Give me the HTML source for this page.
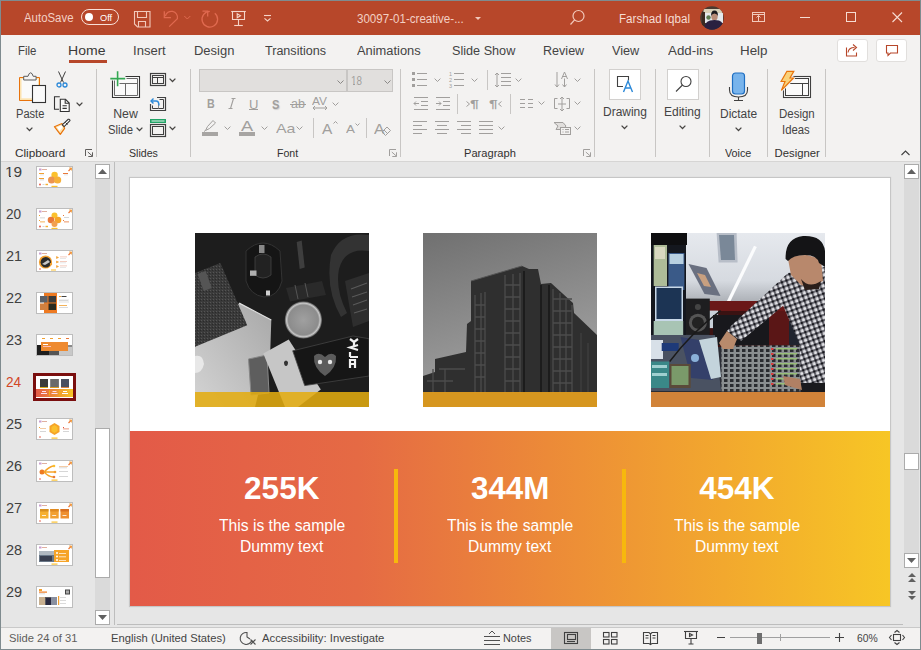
<!DOCTYPE html>
<html><head><meta charset="utf-8"><style>
*{box-sizing:border-box;margin:0;padding:0}
html,body{width:921px;height:650px;overflow:hidden;background:#7f8b8f;font-family:"Liberation Sans",sans-serif;}
.a{position:absolute}
.t{position:absolute;white-space:nowrap;line-height:1;transform-origin:0 0}
svg{position:absolute;overflow:visible}
</style></head><body>
<div class="a" style="left:1px;top:1px;width:919px;height:34px;background:#B7472A"></div>
<div class="a" style="left:1px;top:35px;width:919px;height:126px;background:#F3F2F1"></div>
<div class="a" style="left:1px;top:161px;width:919px;height:1px;background:#D6D5D4"></div>
<div class="a" style="left:1px;top:162px;width:919px;height:465px;background:#E6E6E6"></div>
<div class="a" style="left:1px;top:627px;width:919px;height:1px;background:#C9C9C9"></div>
<div class="a" style="left:1px;top:628px;width:919px;height:21px;background:#F3F2F1"></div>
<div class="t" style="left:24.10px;top:12.34px;font-size:12.00px;color:#F3D0C4;transform:scaleX(0.9510);">AutoSave</div>
<div class="a" style="left:81px;top:9px;width:38px;height:16px;border:1px solid #F8E0D8;border-radius:8px"></div>
<div class="a" style="left:84.5px;top:13px;width:8px;height:8px;background:#fff;border-radius:50%"></div>
<div class="t" style="left:100.30px;top:13.00px;font-size:9.80px;color:#FFFFFF;transform:scaleX(0.9419);">Off</div>
<svg style="left:133px;top:10px" width="18" height="18" viewBox="0 0 18 18" fill="none" stroke="#F2C9BB" stroke-width="1.1">
<path d="M1.5 1.5h15.5v15.5h-12.5l-3-3z"/><path d="M4.5 1.5v6h9v-6"/><path d="M5.5 17v-5.5h7v5.5"/></svg>
<svg style="left:158px;top:6px" width="64" height="24" viewBox="0 0 64 24" fill="none" stroke="#E06A50" stroke-width="1.25">
<path d="M6.3 5.2V11.5H12.9"/><path d="M7.4 10.2A6.1 6.1 0 0 1 19.4 12.6L11.2 20.6"/>
<path d="M26.3 10l3 3 3-3" stroke-width="1"/>
<path d="M51.8 5.4A7.8 7.8 0 1 0 56.8 7.2"/><path d="M44.5 5.2H49.7V10.4"/></svg>
<svg style="left:230px;top:10px" width="18" height="18" viewBox="0 0 18 18" fill="none" stroke="#F6D5C8" stroke-width="1.1">
<path d="M1.2 1.5h14.6"/><path d="M2.5 1.5v8h12v-8"/><path d="M8.5 9.5v6"/><path d="M4.2 15.5h8.6"/><path d="M7.2 3.7v4l3.3-2z"/></svg>
<svg style="left:263px;top:14px" width="10" height="9" viewBox="0 0 10 9" fill="none" stroke="#F6D5C8" stroke-width="1.1"><path d="M1 1.5h7"/><path d="M1.5 4.3l3 2.6 3-2.6"/></svg>
<div class="t" style="left:356.90px;top:13.29px;font-size:12.30px;color:#F3D0C4;transform:scaleX(0.9412);">30097-01-creative-...</div>
<svg style="left:475px;top:17px" width="6" height="3" viewBox="0 0 6 3"><path d="M0 0h6l-3 3z" fill="#F2C9BB"/></svg>
<svg style="left:569px;top:9px" width="18" height="18" viewBox="0 0 18 18" fill="none" stroke="#F2C9BB" stroke-width="1.2">
<circle cx="9.5" cy="7" r="5.5"/><path d="M5.6 10.9L1.5 15.5"/></svg>
<div class="t" style="left:618.66px;top:13.29px;font-size:12.30px;color:#F6DCD2;transform:scaleX(0.9447);">Farshad Iqbal</div>
<svg style="left:700px;top:6px" width="24" height="24" viewBox="0 0 24 24">
<defs><clipPath id="av"><circle cx="12" cy="12" r="11.8"/></clipPath></defs>
<g clip-path="url(#av)"><rect width="24" height="24" fill="#4a3a30"/>
<rect x="3.5" y="3" width="19" height="5" fill="#d8d0b8"/><rect x="5" y="7" width="18" height="10" fill="#e4e8ec"/>
<circle cx="8.5" cy="11.5" r="2.2" fill="#5a7a50"/><rect x="2" y="6" width="3" height="14" fill="#3a2a22"/>
<ellipse cx="14.5" cy="10.5" rx="3.2" ry="4" fill="#b88c78"/><path d="M11.2 10q-.5-5.5 3.3-5.5q3.8 0 3.3 5.5q-.8-2.5-3.3-2.5q-2.5 0-3.3 2.5z" fill="#1a1a1e"/>
<path d="M4 24q0-8 6-9.5l4.5-.5 4.5.5q5 1.5 5 9.5z" fill="#2a2040"/></g></svg>
<svg style="left:751px;top:11px" width="16" height="12" viewBox="0 0 16 12" fill="none" stroke="#F2C9BB" stroke-width="1">
<rect x="1.5" y="1.5" width="12" height="9"/><path d="M1.5 3.5h12"/><path d="M7.5 10v-5.5M5.5 6.5l2-2 2 2"/></svg>
<div class="a" style="left:800px;top:17px;width:10px;height:1px;background:#F6DCD2"></div>
<div class="a" style="left:846px;top:12px;width:10px;height:10px;border:1px solid #F6DCD2"></div>
<svg style="left:891px;top:11px" width="12" height="12" viewBox="0 0 12 12" stroke="#F6DCD2" stroke-width="1.1"><path d="M1.5 1.5l9.5 9.5M11 1.5L1.5 11"/></svg>
<div class="t" style="left:17.67px;top:45.49px;font-size:12.30px;color:#444444;transform:scaleX(0.9275);">File</div>
<div class="t" style="left:68.26px;top:45.49px;font-size:12.30px;color:#3b3a39;transform:scaleX(1.1420);">Home</div>
<div class="t" style="left:132.84px;top:45.49px;font-size:12.30px;color:#444444;transform:scaleX(1.0614);">Insert</div>
<div class="t" style="left:194.14px;top:45.49px;font-size:12.30px;color:#444444;transform:scaleX(1.0551);">Design</div>
<div class="t" style="left:264.50px;top:45.49px;font-size:12.30px;color:#444444;transform:scaleX(1.0213);">Transitions</div>
<div class="t" style="left:357.30px;top:45.49px;font-size:12.30px;color:#444444;transform:scaleX(1.0464);">Animations</div>
<div class="t" style="left:451.70px;top:45.49px;font-size:12.30px;color:#444444;transform:scaleX(1.0286);">Slide Show</div>
<div class="t" style="left:542.58px;top:45.49px;font-size:12.30px;color:#444444;transform:scaleX(1.0218);">Review</div>
<div class="t" style="left:612.00px;top:45.49px;font-size:12.30px;color:#444444;transform:scaleX(1.0320);">View</div>
<div class="t" style="left:667.90px;top:45.49px;font-size:12.30px;color:#444444;transform:scaleX(1.0831);">Add-ins</div>
<div class="t" style="left:739.91px;top:45.49px;font-size:12.30px;color:#444444;transform:scaleX(1.0879);">Help</div>
<div class="a" style="left:69px;top:60px;width:38px;height:3px;background:#B7472A"></div>
<div class="a" style="left:837px;top:39px;width:31px;height:23px;background:#fff;border:1px solid #E1DFDD;border-radius:3px"></div>
<div class="a" style="left:876px;top:39px;width:31px;height:23px;background:#fff;border:1px solid #E1DFDD;border-radius:3px"></div>
<svg style="left:845px;top:43px" width="14" height="14" viewBox="0 0 14 14" fill="none" stroke="#B7472A" stroke-width="1.1">
<path d="M1.5 4.5v8.5h10v-3.5"/><path d="M3 9.5C3.5 6 6.5 4.5 9.5 4.5"/><path d="M8 1.5l3.5 3-3.5 3"/></svg>
<svg style="left:885px;top:44px" width="14" height="13" viewBox="0 0 14 13" fill="none" stroke="#B7472A" stroke-width="1.1">
<path d="M1.5 1.5h11v7.5h-7l-2.5 2.5v-2.5h-1.5z"/></svg>
<div class="a" style="left:96px;top:69px;width:1px;height:88px;background:#C8C6C4"></div>
<div class="a" style="left:190px;top:69px;width:1px;height:88px;background:#C8C6C4"></div>
<div class="a" style="left:400px;top:69px;width:1px;height:88px;background:#C8C6C4"></div>
<div class="a" style="left:594px;top:69px;width:1px;height:88px;background:#C8C6C4"></div>
<div class="a" style="left:655px;top:69px;width:1px;height:88px;background:#C8C6C4"></div>
<div class="a" style="left:709px;top:69px;width:1px;height:88px;background:#C8C6C4"></div>
<div class="a" style="left:767px;top:69px;width:1px;height:88px;background:#C8C6C4"></div>
<div class="a" style="left:825px;top:69px;width:1px;height:88px;background:#C8C6C4"></div>
<svg style="left:85px;top:149px" width="9" height="8" viewBox="0 0 9 8" fill="none" stroke="#605E5C" stroke-width="1"><path d="M.5 7V.5H7"/><path d="M2.8 3l4.5 4M7.5 3.3v4.2h-4.2"/></svg>
<svg style="left:389px;top:149px" width="9" height="8" viewBox="0 0 9 8" fill="none" stroke="#A19F9D" stroke-width="1"><path d="M.5 7V.5H7"/><path d="M2.8 3l4.5 4M7.5 3.3v4.2h-4.2"/></svg>
<svg style="left:583px;top:149px" width="9" height="8" viewBox="0 0 9 8" fill="none" stroke="#A19F9D" stroke-width="1"><path d="M.5 7V.5H7"/><path d="M2.8 3l4.5 4M7.5 3.3v4.2h-4.2"/></svg>
<div class="t" style="left:15.40px;top:147.73px;font-size:11.30px;color:#323130;transform:scaleX(1.0401);">Clipboard</div>
<div class="t" style="left:129.20px;top:147.73px;font-size:11.30px;color:#323130;transform:scaleX(0.9383);">Slides</div>
<div class="t" style="left:276.50px;top:147.73px;font-size:11.30px;color:#323130;transform:scaleX(0.9375);">Font</div>
<div class="t" style="left:463.80px;top:147.73px;font-size:11.30px;color:#323130;transform:scaleX(0.9834);">Paragraph</div>
<div class="t" style="left:725.40px;top:147.73px;font-size:11.30px;color:#323130;transform:scaleX(0.9542);">Voice</div>
<div class="t" style="left:774.60px;top:147.73px;font-size:11.30px;color:#323130;">Designer</div>
<svg style="left:14px;top:68px" width="40" height="40" viewBox="0 0 40 40">
<path d="M5.5 9.5H25.5V32.5H5.5z" fill="#FCE3B0" stroke="#E8730C" stroke-width="1"/>
<rect x="7.5" y="11" width="16.5" height="19.3" fill="#FAFAFA"/>
<path d="M9.7 12V8.3H14Q15 4.8 16.6 4.8T19.2 8.3H22.1V12z" fill="#F4F4F4" stroke="#5c5c5c" stroke-width="1"/>
<rect x="18.5" y="17.5" width="13" height="17" fill="#FAFAFA" stroke="#333" stroke-width="1.1"/></svg>
<div class="t" style="left:15.70px;top:108.19px;font-size:12.30px;color:#444444;transform:scaleX(0.9018);">Paste</div>
<svg style="left:26px;top:127px" width="7" height="4" viewBox="0 0 7 4" fill="none" stroke="#484644" stroke-width="1.25"><path d="M.6 .6l2.9 2.9 2.9-2.9"/></svg>
<svg style="left:56px;top:71px" width="12" height="17" viewBox="0 0 12 17" fill="none">
<path d="M2.5 .5l5 11M9.5 .5l-5 11" stroke="#404040" stroke-width="1"/>
<circle cx="3" cy="14" r="2" stroke="#2B88D8" stroke-width="1.3"/><circle cx="9" cy="14" r="2" stroke="#2B88D8" stroke-width="1.3"/></svg>
<svg style="left:53px;top:95px" width="18" height="18" viewBox="0 0 18 18" fill="none" stroke="#333" stroke-width="1.1">
<path d="M6.8 1.7H1.5V14.3H6"/><path d="M7.3 4.3h5.2l3.7 3.7v8.5h-8.9z" fill="#FAFAFA"/><path d="M12.2 4.5v3.8h3.8"/><path d="M9.5 10.7h4.3M9.5 13.4h4.3"/></svg>
<svg style="left:76px;top:102px" width="7" height="4" viewBox="0 0 7 4" fill="none" stroke="#484644" stroke-width="1.25"><path d="M.6 .6l2.9 2.9 2.9-2.9"/></svg>
<svg style="left:53px;top:118px" width="18" height="18" viewBox="0 0 18 18">
<path d="M1.4 8.7L9 5.5L11.6 10.3L7.3 16.3z" fill="#FCE3B0" stroke="#E8730C" stroke-width="1.2" stroke-linejoin="round"/>
<path d="M4 9.2L8.5 7.3L9.6 9.6L6.4 13z" fill="#fff"/>
<path d="M9.2 6.8L15.2 1.3Q16.8 .8 17 2.6L11.2 8.6z" fill="#fff" stroke="#333" stroke-width="1.1"/>
<path d="M12.5 4.5l2 2" stroke="#333" stroke-width="1"/></svg>
<svg style="left:105px;top:66px" width="40" height="36" viewBox="0 0 40 36" fill="none">
<rect x="8" y="11" width="26" height="20" fill="#FAFAFA"/>
<path d="M20.5 10.5H34.5V31.5H7.5V14.5" stroke="#333" stroke-width="1.1"/>
<path d="M21.5 12.5H32.5V29.5H9.5V14.5" stroke="#6a6a6a" stroke-width="1"/>
<path d="M14.5 17.5H32.5M20.5 17.5V29.5" stroke="#6a6a6a" stroke-width="1"/>
<path d="M5.3 12.6H20.2M12.6 5.3V20.2" stroke="#33A852" stroke-width="1.6"/></svg>
<div class="t" style="left:113.20px;top:107.89px;font-size:12.30px;color:#444444;">New</div>
<div class="t" style="left:108.00px;top:123.99px;font-size:12.30px;color:#444444;transform:scaleX(0.9162);">Slide</div>
<svg style="left:136px;top:127px" width="7" height="4" viewBox="0 0 7 4" fill="none" stroke="#484644" stroke-width="1.25"><path d="M.6 .6l2.9 2.9 2.9-2.9"/></svg>
<svg style="left:150px;top:73px" width="16" height="13" viewBox="0 0 16 13" fill="none" stroke="#404040" stroke-width="1"><rect x=".5" y=".5" width="15" height="12" stroke-width="1.2"/><rect x="2.5" y="2.5" width="11" height="8"/><path d="M2.5 4.5h11M7.5 4.5v6"/></svg>
<svg style="left:169px;top:78px" width="7" height="4" viewBox="0 0 7 4" fill="none" stroke="#484644" stroke-width="1.25"><path d="M.6 .6l2.9 2.9 2.9-2.9"/></svg>
<svg style="left:149px;top:96px" width="18" height="15" viewBox="0 0 18 15" fill="none" stroke="#404040" stroke-width="1"><path d="M8 1.5h8.5v13h-15v-6.5" stroke-width="1.2"/><path d="M10.5 3.5h4v9h-11v-3"/><path d="M9.5 6.5v6" stroke="#888"/><path d="M2 5h5q3 0 3 4.5" stroke="#2B88D8" stroke-width="1.4"/><path d="M4.5 2.5l-2.5 2.5 2.5 2.5" stroke="#2B88D8" stroke-width="1.4"/></svg>
<svg style="left:150px;top:119px" width="16" height="18" viewBox="0 0 16 18" fill="none" stroke="#404040" stroke-width="1"><rect x=".75" y=".75" width="14.5" height="2.5" stroke="#21A366" stroke-width="1.5" fill="#E8F5EE"/><rect x=".5" y="5.5" width="15" height="12" stroke-width="1.2"/><rect x="2.5" y="7.5" width="11" height="8"/></svg>
<svg style="left:169px;top:126px" width="7" height="4" viewBox="0 0 7 4" fill="none" stroke="#484644" stroke-width="1.25"><path d="M.6 .6l2.9 2.9 2.9-2.9"/></svg>
<div class="a" style="left:199px;top:69px;width:148px;height:23px;background:#E1DFDD;border:1px solid #C8C6C4"></div>
<div class="a" style="left:347px;top:69px;width:46px;height:23px;background:#E1DFDD;border:1px solid #C8C6C4"></div>
<svg style="left:337px;top:80px" width="7" height="4" viewBox="0 0 7 4" fill="none" stroke="#8A8886" stroke-width="1"><path d="M.5 .5l3 3 3-3"/></svg>
<svg style="left:384px;top:80px" width="7" height="4" viewBox="0 0 7 4" fill="none" stroke="#8A8886" stroke-width="1"><path d="M.5 .5l3 3 3-3"/></svg>
<div class="t" style="left:350.80px;top:74.84px;font-size:12.00px;color:#A19F9D;transform:scaleX(0.8191);">18</div>
<div class="t" style="left:206.60px;top:98.42px;font-size:12.50px;color:#A19F9D;font-weight:bold;transform:scaleX(0.8556);">B</div>
<svg style="left:228px;top:98px" width="8" height="11" viewBox="0 0 8 11" fill="none" stroke="#A19F9D" stroke-width="1.1"><path d="M3.5 .5h4M.5 10.5h4M5.5 .5l-3 10"/></svg>
<div class="t" style="left:249.00px;top:98.54px;font-size:12.00px;color:#A19F9D;transform:scaleX(1.0875);">U</div>
<div class="a" style="left:249px;top:109px;width:9px;height:1px;background:#A19F9D"></div>
<div class="t" style="left:271.50px;top:98.00px;font-size:13.00px;color:#A19F9D;font-weight:bold;transform:scaleX(0.8556);text-shadow:1px 1px 1px #d0d0d0;">S</div>
<div class="t" style="left:291.00px;top:98.42px;font-size:12.50px;color:#A19F9D;">ab</div>
<div class="a" style="left:290px;top:104px;width:16px;height:1px;background:#A19F9D"></div>
<div class="t" style="left:312.30px;top:95.97px;font-size:11.50px;color:#A19F9D;transform:scaleX(1.0394);">AV</div>
<svg style="left:312px;top:105px" width="16" height="6" viewBox="0 0 16 6" fill="none" stroke="#A19F9D" stroke-width="1"><path d="M1 3h14M3 1l-2 2 2 2M13 1l2 2-2 2"/></svg>
<svg style="left:332px;top:102px" width="7" height="4" viewBox="0 0 7 4" fill="none" stroke="#A19F9D" stroke-width="1.0"><path d="M.6 .6l2.9 2.9 2.9-2.9"/></svg>
<svg style="left:202px;top:119px" width="17" height="17" viewBox="0 0 17 17">
<path d="M3.5 11.5l2-4 5.5-6 2.5 2.5-6 5.5-4 2z M2 12.5l1.5-1" fill="none" stroke="#A19F9D" stroke-width="1"/>
<rect x="0" y="13" width="16" height="4" fill="#A7A5A3"/></svg>
<svg style="left:224px;top:126px" width="7" height="4" viewBox="0 0 7 4" fill="none" stroke="#A19F9D" stroke-width="1.0"><path d="M.6 .6l2.9 2.9 2.9-2.9"/></svg>
<div class="t" style="left:240.50px;top:119.45px;font-size:14.00px;color:#A19F9D;transform:scaleX(1.3000);">A</div>
<div class="a" style="left:239px;top:132px;width:16px;height:4px;background:#A7A5A3"></div>
<svg style="left:260.5px;top:126px" width="7" height="4" viewBox="0 0 7 4" fill="none" stroke="#A19F9D" stroke-width="1.0"><path d="M.6 .6l2.9 2.9 2.9-2.9"/></svg>
<div class="t" style="left:276.00px;top:122.27px;font-size:13.50px;color:#A19F9D;transform:scaleX(1.1762);">Aa</div>
<svg style="left:296px;top:126px" width="7" height="4" viewBox="0 0 7 4" fill="none" stroke="#A19F9D" stroke-width="1.0"><path d="M.6 .6l2.9 2.9 2.9-2.9"/></svg>
<div class="a" style="left:313px;top:118px;width:1px;height:20px;background:#C8C6C4"></div>
<div class="t" style="left:322.00px;top:120.78px;font-size:15.50px;color:#A19F9D;">A</div>
<svg style="left:333px;top:121px" width="5" height="3" viewBox="0 0 5 3" fill="none" stroke="#A19F9D" stroke-width="1"><path d="M.5 2.5l2-2 2 2"/></svg>
<div class="t" style="left:345.70px;top:124.17px;font-size:11.50px;color:#A19F9D;transform:scaleX(1.1625);">A</div>
<svg style="left:355px;top:123px" width="5" height="3" viewBox="0 0 5 3" fill="none" stroke="#A19F9D" stroke-width="1"><path d="M.5 .5l2 2 2-2"/></svg>
<div class="a" style="left:366px;top:118px;width:1px;height:20px;background:#C8C6C4"></div>
<div class="t" style="left:373.80px;top:120.58px;font-size:15.50px;color:#A19F9D;transform:scaleX(1.0182);">A</div>
<svg style="left:381px;top:126px" width="10" height="10" viewBox="0 0 10 10" fill="none" stroke="#A19F9D" stroke-width="1"><path d="M1 6l5-5 3.5 3.5-5 5z M3 4l3.5 3.5"/></svg>
<svg style="left:412px;top:72px" width="15" height="15" viewBox="0 0 15 15"><rect x="0" y="0" width="3" height="3" fill="#A19F9D"/><rect x="5" y="1" width="10" height="1" fill="#A19F9D"/><rect x="0" y="6" width="3" height="3" fill="#A19F9D"/><rect x="5" y="7" width="10" height="1" fill="#A19F9D"/><rect x="0" y="12" width="3" height="3" fill="#A19F9D"/><rect x="5" y="13" width="10" height="1" fill="#A19F9D"/></svg>
<svg style="left:433.5px;top:78px" width="7" height="4" viewBox="0 0 7 4" fill="none" stroke="#A19F9D" stroke-width="1.0"><path d="M.6 .6l2.9 2.9 2.9-2.9"/></svg>
<svg style="left:449px;top:70px" width="16" height="19" viewBox="0 0 16 19">
<text x="0" y="6" font-size="5.5" fill="#A19F9D" font-family="Liberation Sans">1</text><text x="0" y="12" font-size="5.5" fill="#A19F9D" font-family="Liberation Sans">2</text><text x="0" y="18" font-size="5.5" fill="#A19F9D" font-family="Liberation Sans">3</text>
<rect x="5" y="3" width="10" height="1" fill="#A19F9D"/><rect x="5" y="9" width="10" height="1" fill="#A19F9D"/><rect x="5" y="15" width="10" height="1" fill="#A19F9D"/></svg>
<svg style="left:470.5px;top:78px" width="7" height="4" viewBox="0 0 7 4" fill="none" stroke="#A19F9D" stroke-width="1.0"><path d="M.6 .6l2.9 2.9 2.9-2.9"/></svg>
<div class="a" style="left:487px;top:70px;width:1px;height:20px;background:#C8C6C4"></div>
<svg style="left:494px;top:72px" width="17" height="16" viewBox="0 0 17 16" fill="none" stroke="#A19F9D" stroke-width="1">
<path d="M3 1v14M1 3l2-2 2 2M1 13l2 2 2-2"/><path d="M7 1.5h10M7 5.5h10M7 9.5h10M7 13.5h10"/></svg>
<svg style="left:514.5px;top:78px" width="7" height="4" viewBox="0 0 7 4" fill="none" stroke="#A19F9D" stroke-width="1.0"><path d="M.6 .6l2.9 2.9 2.9-2.9"/></svg>
<svg style="left:555px;top:71px" width="15" height="17" viewBox="0 0 15 17" fill="none" stroke="#A19F9D" stroke-width="1">
<path d="M2 1v15M0 13.5l2 2.5 2-2.5"/><path d="M9.5 7.5v8.5M7.5 13.5l2 2.5 2-2.5"/><path d="M6.5 8l3-7 3 7M7.5 5.5h4"/></svg>
<svg style="left:573.5px;top:78px" width="7" height="4" viewBox="0 0 7 4" fill="none" stroke="#A19F9D" stroke-width="1.0"><path d="M.6 .6l2.9 2.9 2.9-2.9"/></svg>
<svg style="left:413px;top:97px" width="15" height="14" viewBox="0 0 15 14" fill="none" stroke="#A19F9D" stroke-width="1"><path d="M1 .5h14M8 4.5h7M8 8.5h7M1 12.5h14"/><path d="M1 6.5h5M3 4.5l-2 2 2 2"/></svg>
<svg style="left:435px;top:97px" width="15" height="14" viewBox="0 0 15 14" fill="none" stroke="#A19F9D" stroke-width="1"><path d="M1 .5h14M8 4.5h7M8 8.5h7M1 12.5h14"/><path d="M1 6.5h5M4 4.5l2 2-2 2"/></svg>
<div class="a" style="left:457px;top:94px;width:1px;height:20px;background:#C8C6C4"></div>
<div class="t" style="left:470.00px;top:99.39px;font-size:11.00px;color:#A19F9D;font-weight:bold;transform:scaleX(1.4667);">¶</div>
<svg style="left:466px;top:101px" width="4" height="6" viewBox="0 0 4 6" fill="none" stroke="#A19F9D" stroke-width="1"><path d="M.5 .5l3 2.5-3 2.5"/></svg>
<div class="t" style="left:489.00px;top:99.39px;font-size:11.00px;color:#A19F9D;font-weight:bold;transform:scaleX(1.4167);">¶</div>
<svg style="left:498px;top:101px" width="4" height="6" viewBox="0 0 4 6" fill="none" stroke="#A19F9D" stroke-width="1"><path d="M3.5 .5l-3 2.5 3 2.5"/></svg>
<div class="a" style="left:510px;top:94px;width:1px;height:20px;background:#C8C6C4"></div>
<svg style="left:520px;top:99px" width="13" height="9" viewBox="0 0 13 9" fill="none" stroke="#A19F9D" stroke-width="1"><path d="M0 .5h5M0 4.5h5M0 8.5h5M8 .5h5M8 4.5h5M8 8.5h5"/></svg>
<svg style="left:538px;top:101px" width="7" height="4" viewBox="0 0 7 4" fill="none" stroke="#A19F9D" stroke-width="1.0"><path d="M.6 .6l2.9 2.9 2.9-2.9"/></svg>
<svg style="left:554px;top:96px" width="16" height="16" viewBox="0 0 16 16" fill="none" stroke="#A19F9D" stroke-width="1">
<path d="M3.5 2.5h-3v10h3M12.5 2.5h3v10h-3"/><path d="M8 1v14M6 3l2-2 2 2M6 13l2 2 2-2M4 8h8"/></svg>
<svg style="left:573.5px;top:101px" width="7" height="4" viewBox="0 0 7 4" fill="none" stroke="#A19F9D" stroke-width="1.0"><path d="M.6 .6l2.9 2.9 2.9-2.9"/></svg>
<svg style="left:413px;top:121px" width="15" height="13" viewBox="0 0 15 13" fill="none" stroke="#A19F9D" stroke-width="1"><path d="M0 .5h14M0 4.5h9M0 8.5h14M0 12.5h9"/></svg>
<svg style="left:435px;top:121px" width="15" height="13" viewBox="0 0 15 13" fill="none" stroke="#A19F9D" stroke-width="1"><path d="M0 .5h14M2 4.5h10M0 8.5h14M2 12.5h10"/></svg>
<svg style="left:457px;top:121px" width="15" height="13" viewBox="0 0 15 13" fill="none" stroke="#A19F9D" stroke-width="1"><path d="M0 .5h14M4 4.5h10M0 8.5h14M4 12.5h10"/></svg>
<svg style="left:479px;top:121px" width="15" height="13" viewBox="0 0 15 13" fill="none" stroke="#A19F9D" stroke-width="1"><path d="M0 .5h14M0 4.5h14M0 8.5h14M0 12.5h14"/></svg>
<svg style="left:497.5px;top:126px" width="7" height="4" viewBox="0 0 7 4" fill="none" stroke="#A19F9D" stroke-width="1.0"><path d="M.6 .6l2.9 2.9 2.9-2.9"/></svg>
<svg style="left:554px;top:122px" width="17" height="13" viewBox="0 0 17 13" fill="none" stroke="#A19F9D" stroke-width="1">
<path d="M0 .5h9l3 3.5-3 3.5h-7l2-3.5z" fill="#E1DFDD"/><rect x="6.5" y="5.5" width="10" height="7" fill="#F3F2F1"/><path d="M8.5 7.5h1M11 7.5h4M8.5 10h1M11 10h4"/></svg>
<svg style="left:573.5px;top:126px" width="7" height="4" viewBox="0 0 7 4" fill="none" stroke="#A19F9D" stroke-width="1.0"><path d="M.6 .6l2.9 2.9 2.9-2.9"/></svg>
<div class="a" style="left:609px;top:69px;width:32px;height:31px;background:#fff;border:1px solid #D2D0CE"></div>
<svg style="left:616px;top:75px" width="18" height="18" viewBox="0 0 18 18" fill="none">
<path d="M7 11.5H1.5V1.5h11v4" stroke="#404040" stroke-width="1.1"/><path d="M7.5 17l4.5-11 4.5 11M9 13h6" stroke="#2B88D8" stroke-width="1.4"/></svg>
<div class="t" style="left:602.53px;top:106.29px;font-size:12.30px;color:#444444;transform:scaleX(0.9737);">Drawing</div>
<svg style="left:620.5px;top:125px" width="7" height="4" viewBox="0 0 7 4" fill="none" stroke="#484644" stroke-width="1.25"><path d="M.6 .6l2.9 2.9 2.9-2.9"/></svg>
<div class="a" style="left:667px;top:69px;width:32px;height:31px;background:#fff;border:1px solid #D2D0CE"></div>
<svg style="left:675px;top:75px" width="18" height="18" viewBox="0 0 18 18" fill="none" stroke="#404040" stroke-width="1.1">
<circle cx="11" cy="6.5" r="5"/><path d="M7.5 10L1 16.5"/></svg>
<div class="t" style="left:663.62px;top:106.29px;font-size:12.30px;color:#444444;transform:scaleX(0.9766);">Editing</div>
<svg style="left:678.5px;top:125px" width="7" height="4" viewBox="0 0 7 4" fill="none" stroke="#484644" stroke-width="1.25"><path d="M.6 .6l2.9 2.9 2.9-2.9"/></svg>
<svg style="left:728px;top:72px" width="21" height="29" viewBox="0 0 21 29" fill="none">
<rect x="4.5" y="1" width="12" height="21" rx="3" fill="#78B4EC" stroke="#1F6FC2" stroke-width="1.2"/>
<path d="M1.5 15v3q0 7 9 7t9-7v-3" stroke="#404040" stroke-width="1.1"/><path d="M10.5 25v3M6 28.5h9" stroke="#404040" stroke-width="1.1"/></svg>
<div class="t" style="left:719.83px;top:108.19px;font-size:12.30px;color:#444444;transform:scaleX(0.9724);">Dictate</div>
<svg style="left:734.5px;top:127px" width="7" height="4" viewBox="0 0 7 4" fill="none" stroke="#484644" stroke-width="1.25"><path d="M.6 .6l2.9 2.9 2.9-2.9"/></svg>
<svg style="left:775px;top:66px" width="40" height="36" viewBox="0 0 40 36" fill="none">
<rect x="8.5" y="10.5" width="27" height="21" stroke="#404040" stroke-width="1.1" fill="#FAFAFA"/>
<rect x="10.5" y="12.5" width="23" height="17" stroke="#404040" stroke-width="1"/>
<path d="M10.5 17.5h23M27.5 17.5v12" stroke="#404040" stroke-width="1"/>
<path d="M11.9 5.3h6.9l-3.8 6.7h3.5l-12.1 12.4 3.6-8.9h-3.9z" fill="#FAD27A" stroke="#F3F2F1" stroke-width="3.2" stroke-linejoin="round"/>
<path d="M11.9 5.3h6.9l-3.8 6.7h3.5l-12.1 12.4 3.6-8.9h-3.9z" fill="#FAD27A" stroke="#E8730C" stroke-width="1.2"/></svg>
<div class="t" style="left:778.77px;top:108.19px;font-size:12.30px;color:#444444;transform:scaleX(0.9322);">Design</div>
<div class="t" style="left:782.48px;top:123.99px;font-size:12.30px;color:#444444;transform:scaleX(0.9194);">Ideas</div>
<svg style="left:901px;top:150px" width="9" height="6" viewBox="0 0 9 6" fill="none" stroke="#404040" stroke-width="1.1"><path d="M.5 5l4-4 4 4"/></svg>
<div class="a" style="left:350px;top:84px;width:3px;height:1px;background:#E1DFDD"></div>
<div class="a" style="left:355px;top:84px;width:1px;height:1px;background:#E1DFDD"></div>
<div class="a" style="left:95px;top:164px;width:15px;height:461px;background:#DADADA"></div>
<div class="a" style="left:95px;top:164px;width:15px;height:15px;background:#fff;border:1px solid #ABABAB"></div>
<svg style="left:98px;top:169px" width="9" height="5" viewBox="0 0 9 5"><path d="M0 5L4.5 0 9 5z" fill="#606060"/></svg>
<div class="a" style="left:95px;top:428px;width:15px;height:150px;background:#fff;border:1px solid #ABABAB"></div>
<div class="a" style="left:95px;top:610px;width:15px;height:15px;background:#fff;border:1px solid #ABABAB"></div>
<svg style="left:98px;top:615px" width="9" height="5" viewBox="0 0 9 5"><path d="M0 0L4.5 5 9 0z" fill="#606060"/></svg>
<div class="a" style="left:114px;top:162px;width:1px;height:463px;background:#BDBDBD"></div>
<div class="a" style="left:117px;top:624px;width:786px;height:1px;background:#BDBDBD"></div>
<div class="t" style="left:4.61px;top:163.78px;font-size:15.50px;color:#404040;transform:scaleX(0.9923);">19</div>
<div class="a" style="left:36px;top:166px;width:37px;height:22px;border:1px solid #BDBDBD;background:#fff"></div>
<svg style="left:37px;top:167px" width="35" height="20" viewBox="0 0 35 20"><rect width="35" height="20" fill="#fff"/><rect x="2" y="1.5" width="2.5" height="2" fill="#C9A0D0"/><rect x="5" y="2" width="5" height="1" fill="#E0B0A0"/><path d="M31.5 4l3-3" stroke="#EE7A3A" stroke-width="1.3"/><path d="M32 1h2.5v2.5" stroke="#F2A030" stroke-width=".8" fill="none"/><circle cx="17.6" cy="8" r="3.2" fill="#FBC02D"/><circle cx="14.6" cy="13" r="3.6" fill="#EC9450"/><circle cx="20.6" cy="13" r="3.6" fill="#F6B038"/><rect x="2" y="6" width="5" height="1" fill="#F2A030"/><rect x="3" y="7.5" width="4" height=".8" fill="#ddd"/><rect x="2" y="11" width="5" height="1" fill="#F2A030"/><rect x="3" y="12.5" width="4" height=".8" fill="#ccc"/><rect x="26" y="6" width="5" height="1" fill="#E8783A"/><rect x="27" y="7.5" width="4" height=".8" fill="#ddd"/><circle cx="3" cy="17.5" r=".9" fill="#E8503A"/><rect x="5.5" y="17" width="2" height=".8" fill="#ccc"/><rect x="8.5" y="16.8" width="2.5" height="1.4" fill="#F6B030"/><rect x="14.5" y="18.8" width="6" height="1.2" fill="#FBC02D"/></svg>
<div class="t" style="left:5.60px;top:205.78px;font-size:15.50px;color:#404040;transform:scaleX(0.8797);">20</div>
<div class="a" style="left:36px;top:208px;width:37px;height:22px;border:1px solid #BDBDBD;background:#fff"></div>
<svg style="left:37px;top:209px" width="35" height="20" viewBox="0 0 35 20"><rect width="35" height="20" fill="#fff"/><rect x="2" y="1.5" width="2.5" height="2" fill="#C9A0D0"/><rect x="5" y="2" width="5" height="1" fill="#E0B0A0"/><path d="M31.5 4l3-3" stroke="#EE7A3A" stroke-width="1.3"/><path d="M32 1h2.5v2.5" stroke="#F2A030" stroke-width=".8" fill="none"/><circle cx="17.5" cy="6.5" r="3" fill="#FBC02D"/><circle cx="14" cy="11" r="3.3" fill="#E8783A"/><circle cx="21" cy="11" r="3.3" fill="#F6A428"/><circle cx="17.5" cy="15" r="3" fill="#F2A050"/><rect x="2" y="6" width="1" height="1" fill="#F2A030"/><rect x="3" y="8.5" width="5" height=".8" fill="#ccc"/><rect x="2" y="11" width="1" height="1" fill="#F2A030"/><rect x="3" y="12.5" width="5" height=".8" fill="#F2A030"/><rect x="26" y="6" width="1" height="1" fill="#E8783A"/><rect x="27" y="8" width="5" height=".8" fill="#ccc"/><rect x="26" y="11" width="1" height="1" fill="#E8783A"/><rect x="27" y="12.5" width="5" height=".8" fill="#E8783A"/><circle cx="3" cy="17.5" r=".9" fill="#E8503A"/><rect x="5.5" y="17" width="2" height=".8" fill="#ccc"/><rect x="8.5" y="16.8" width="2.5" height="1.4" fill="#F6B030"/><rect x="14.5" y="18.8" width="6" height="1.2" fill="#FBC02D"/></svg>
<div class="t" style="left:5.60px;top:247.78px;font-size:15.50px;color:#404040;transform:scaleX(0.9326);">21</div>
<div class="a" style="left:36px;top:250px;width:37px;height:22px;border:1px solid #BDBDBD;background:#fff"></div>
<svg style="left:37px;top:251px" width="35" height="20" viewBox="0 0 35 20"><rect width="35" height="20" fill="#fff"/><rect x="2" y="1.5" width="2.5" height="2" fill="#C9A0D0"/><rect x="5" y="2" width="5" height="1" fill="#E0B0A0"/><path d="M31.5 4l3-3" stroke="#EE7A3A" stroke-width="1.3"/><path d="M32 1h2.5v2.5" stroke="#F2A030" stroke-width=".8" fill="none"/><circle cx="8.5" cy="11" r="6.6" fill="#F2A030"/><circle cx="8.8" cy="11.2" r="5.2" fill="#2a2a2a"/><path d="M5 13l6-4 2 2-5 3z" fill="#c8c8c8"/><circle cx="14" cy="13" r="1.2" fill="#F2A030"/><path d="M19.5 5.5l2 1-2 1z M19.5 10l2 1-2 1z M19.5 14.5l2 1-2 1z" fill="#F2A030" stroke="#F2A030" stroke-width=".6"/><rect x="23" y="5.5" width="7" height=".8" fill="#F0C0B0"/><rect x="23" y="7" width="6" height=".7" fill="#ddd"/><rect x="23" y="10" width="7" height=".8" fill="#F0C0B0"/><rect x="23" y="11.5" width="6" height=".7" fill="#ddd"/><rect x="23" y="14.5" width="7" height=".8" fill="#F0C0B0"/><rect x="23" y="16" width="6" height=".7" fill="#ddd"/><rect x="14" y="18.5" width="5" height="1" fill="#FBC02D"/><circle cx="3" cy="18" r=".8" fill="#E8503A"/></svg>
<div class="t" style="left:5.60px;top:289.78px;font-size:15.50px;color:#404040;transform:scaleX(0.9326);">22</div>
<div class="a" style="left:36px;top:292px;width:37px;height:22px;border:1px solid #BDBDBD;background:#fff"></div>
<svg style="left:37px;top:293px" width="35" height="20" viewBox="0 0 35 20"><rect width="35" height="20" fill="#fff"/><rect x="7" y="0" width="13" height="20" fill="#EE7A22"/><rect x="3" y="3" width="7.5" height="6.5" fill="#5a6068"/><rect x="11.5" y="3" width="7.5" height="6.5" fill="#3a3a3a"/><rect x="3" y="10.5" width="7.5" height="6.5" fill="#D08040"/><rect x="11.5" y="10.5" width="7.5" height="6.5" fill="#2a2a20"/><rect x="22" y="3" width="2" height="1" fill="#F2A030"/><rect x="24.5" y="3" width="5" height="1" fill="#444"/><rect x="22" y="6" width="10" height="4" fill="#f0f0f0"/><rect x="22" y="7" width="9" height=".7" fill="#ccc"/><rect x="22" y="12" width="8" height=".8" fill="#F2A030"/><rect x="22" y="14" width="9" height=".7" fill="#ccc"/></svg>
<div class="t" style="left:5.60px;top:331.78px;font-size:15.50px;color:#404040;transform:scaleX(0.9326);">23</div>
<div class="a" style="left:36px;top:334px;width:37px;height:22px;border:1px solid #BDBDBD;background:#fff"></div>
<svg style="left:37px;top:335px" width="35" height="20" viewBox="0 0 35 20"><rect width="35" height="20" fill="#fff"/><rect x="5" y="3" width="3" height="1" fill="#F2A030"/><rect x="13" y="3" width="3" height="1" fill="#F2A030"/><rect x="21" y="3" width="3" height="1" fill="#F2A030"/><rect x="29" y="3" width="3" height="1" fill="#E8783A"/><rect x="0" y="10" width="35" height="10" fill="#8a8a8a"/><rect x="0" y="10" width="12" height="10" fill="#1e1e1e"/><rect x="22" y="12" width="13" height="8" fill="#c8c8c8"/><rect x="12" y="14" width="10" height="6" fill="#555"/><rect x="4" y="7" width="27" height="9" fill="#EE8A30"/><rect x="6" y="9" width="5" height="1" fill="#fff"/><rect x="6" y="11" width="8" height=".8" fill="#FCD"/></svg>
<div class="t" style="left:5.60px;top:373.78px;font-size:15.50px;color:#D24726;transform:scaleX(0.8797);">24</div>
<div class="a" style="left:33px;top:373px;width:43px;height:28px;border:3px solid #7A0E0E;background:#fff"></div>
<svg style="left:36px;top:376px" width="37" height="22" viewBox="0 0 37 22">
<rect width="37" height="22" fill="#fff"/>
<defs><linearGradient id="tg" x1="0" x2="1"><stop offset="0" stop-color="#E35A48"/><stop offset=".5" stop-color="#EC8A38"/><stop offset="1" stop-color="#F7C625"/></linearGradient></defs>
<rect x="4" y="3" width="8" height="9" fill="#3a3a3a"/><rect x="14.2" y="3" width="8.7" height="9" fill="#6a6a6a"/><rect x="25" y="3" width="8" height="9" fill="#4a5060"/>
<rect x="4" y="11" width="8" height="1" fill="#D8A818"/><rect x="14.2" y="11" width="8.7" height="1" fill="#DC9A1E"/><rect x="25" y="11" width="8" height="1" fill="#D9823D"/>
<rect x="0" y="13" width="37" height="8" fill="url(#tg)"/>
<rect x="6" y="15" width="4" height="1" fill="#fde"/><rect x="5" y="17" width="6" height="1" fill="#fde"/><rect x="16.5" y="15" width="4" height="1" fill="#fde"/><rect x="15.5" y="17" width="6" height="1" fill="#fde"/><rect x="27" y="15" width="4" height="1" fill="#fff"/><rect x="26" y="17" width="6" height="1" fill="#fff"/>
<rect x="13" y="14.5" width=".8" height="5" fill="#F5B90A"/><rect x="23.5" y="14.5" width=".8" height="5" fill="#F5B90A"/></svg>
<div class="t" style="left:5.60px;top:415.78px;font-size:15.50px;color:#404040;transform:scaleX(0.9326);">25</div>
<div class="a" style="left:36px;top:418px;width:37px;height:22px;border:1px solid #BDBDBD;background:#fff"></div>
<svg style="left:37px;top:419px" width="35" height="20" viewBox="0 0 35 20"><rect width="35" height="20" fill="#fff"/><rect x="2" y="1.5" width="2.5" height="2" fill="#C9A0D0"/><rect x="5" y="2" width="5" height="1" fill="#E0B0A0"/><path d="M31.5 4l3-3" stroke="#EE7A3A" stroke-width="1.3"/><path d="M32 1h2.5v2.5" stroke="#F2A030" stroke-width=".8" fill="none"/><path d="M17.5 4l5 3v6l-5 3-5-3V7z" fill="#F6A428"/><path d="M17.5 6l3 2v4l-3 2-3-2V8z" fill="#FBC02D"/><rect x="2" y="8" width="1" height="1" fill="#F2A030"/><rect x="3" y="9" width="6" height=".8" fill="#F2C090"/><rect x="3" y="12" width="6" height=".8" fill="#ccc"/><rect x="26" y="8" width="1" height="1" fill="#E8503A"/><rect x="26" y="9.5" width="6" height=".8" fill="#E88060"/><rect x="26" y="12" width="6" height=".8" fill="#ccc"/><circle cx="3" cy="18" r=".8" fill="#E8503A"/><rect x="14.5" y="18.5" width="6" height="1.2" fill="#FBC02D"/></svg>
<div class="t" style="left:5.60px;top:457.78px;font-size:15.50px;color:#404040;transform:scaleX(0.9326);">26</div>
<div class="a" style="left:36px;top:460px;width:37px;height:22px;border:1px solid #BDBDBD;background:#fff"></div>
<svg style="left:37px;top:461px" width="35" height="20" viewBox="0 0 35 20"><rect width="35" height="20" fill="#fff"/><rect x="2" y="1.5" width="2.5" height="2" fill="#C9A0D0"/><rect x="5" y="2" width="5" height="1" fill="#E0B0A0"/><path d="M31.5 4l3-3" stroke="#EE7A3A" stroke-width="1.3"/><path d="M32 1h2.5v2.5" stroke="#F2A030" stroke-width=".8" fill="none"/><circle cx="5" cy="11" r="2.5" fill="#EE7A22"/><path d="M7 11q5-5 9-6M7 11h10M7 11q5 5 9 5" stroke="#F6A428" stroke-width="1.3" fill="none"/><circle cx="17" cy="5" r="1.3" fill="#FBC02D"/><circle cx="18" cy="11" r="1.3" fill="#F2A030"/><circle cx="17" cy="16" r="1.3" fill="#E8783A"/><rect x="22" y="5" width="9" height=".8" fill="#F2C090"/><rect x="22" y="6.5" width="8" height=".7" fill="#ccc"/><rect x="22" y="10" width="9" height=".8" fill="#ccc"/><rect x="22" y="15" width="9" height=".8" fill="#ccc"/><circle cx="3" cy="18" r=".8" fill="#E8503A"/><rect x="14.5" y="18.5" width="6" height="1.2" fill="#FBC02D"/></svg>
<div class="t" style="left:5.60px;top:499.78px;font-size:15.50px;color:#404040;transform:scaleX(0.9326);">27</div>
<div class="a" style="left:36px;top:502px;width:37px;height:22px;border:1px solid #BDBDBD;background:#fff"></div>
<svg style="left:37px;top:503px" width="35" height="20" viewBox="0 0 35 20"><rect width="35" height="20" fill="#fff"/><rect x="2" y="1.5" width="2.5" height="2" fill="#C9A0D0"/><rect x="5" y="2" width="5" height="1" fill="#E0B0A0"/><path d="M31.5 4l3-3" stroke="#EE7A3A" stroke-width="1.3"/><path d="M32 1h2.5v2.5" stroke="#F2A030" stroke-width=".8" fill="none"/><rect x="3" y="6" width="8.5" height="9.5" fill="#F6B030"/><rect x="13.2" y="6" width="8.5" height="9.5" fill="#F2A030"/><rect x="23.5" y="6" width="8.5" height="9.5" fill="#EE9030"/><rect x="3" y="6" width="8.5" height="2.5" fill="#D89020"/><rect x="13.2" y="6" width="8.5" height="2.5" fill="#E08A20"/><rect x="23.5" y="6" width="8.5" height="2.5" fill="#D87020"/><rect x="5" y="12" width="4" height=".8" fill="#fff"/><rect x="15.2" y="12" width="4" height=".8" fill="#fff"/><rect x="25.5" y="12" width="4" height=".8" fill="#fff"/><circle cx="3" cy="18" r=".8" fill="#E8503A"/><rect x="14.5" y="18.5" width="6" height="1.2" fill="#FBC02D"/></svg>
<div class="t" style="left:5.60px;top:541.78px;font-size:15.50px;color:#404040;transform:scaleX(0.9326);">28</div>
<div class="a" style="left:36px;top:544px;width:37px;height:22px;border:1px solid #BDBDBD;background:#fff"></div>
<svg style="left:37px;top:545px" width="35" height="20" viewBox="0 0 35 20"><rect width="35" height="20" fill="#fff"/><rect x="2" y="1.5" width="2.5" height="2" fill="#C9A0D0"/><rect x="5" y="2" width="5" height="1" fill="#E0B0A0"/><path d="M31.5 4l3-3" stroke="#EE7A3A" stroke-width="1.3"/><path d="M32 1h2.5v2.5" stroke="#F2A030" stroke-width=".8" fill="none"/><rect x="2" y="6" width="15" height="11" fill="#6a7888"/><rect x="2" y="6" width="15" height="4" fill="#b0b8c0"/><rect x="3" y="11" width="12" height="5" fill="#3a4050"/><rect x="17" y="5" width="15" height="12" fill="#F6A428"/><circle cx="20" cy="8" r="1" fill="#fff"/><circle cx="20" cy="11.5" r="1" fill="#fff"/><circle cx="20" cy="15" r="1" fill="#fff"/><rect x="22" y="8" width="7" height=".7" fill="#fff"/><rect x="22" y="11.5" width="7" height=".7" fill="#fff"/><rect x="22" y="15" width="7" height=".7" fill="#fff"/><rect x="14.5" y="18.5" width="6" height="1.2" fill="#FBC02D"/></svg>
<div class="t" style="left:5.60px;top:583.78px;font-size:15.50px;color:#404040;transform:scaleX(0.9326);">29</div>
<div class="a" style="left:36px;top:586px;width:37px;height:22px;border:1px solid #BDBDBD;background:#fff"></div>
<svg style="left:37px;top:587px" width="35" height="20" viewBox="0 0 35 20"><rect width="35" height="20" fill="#fff"/><rect x="2" y="2" width="3" height="2" fill="#F2A030"/><rect x="2" y="4.5" width="8" height="1.2" fill="#EE7A22"/><rect x="2" y="6.5" width="6" height=".7" fill="#ccc"/><rect x="2" y="10" width="18" height="8" fill="#5a5a60"/><rect x="2" y="10" width="6" height="8" fill="#c8b090"/><rect x="9" y="11" width="5" height="7" fill="#2a2a40"/><rect x="14" y="10" width="6" height="8" fill="#8a90a0"/><rect x="21" y="9" width="1.2" height="9" fill="#F2A030"/><rect x="23" y="10" width="6" height=".7" fill="#ccc"/><rect x="23" y="13" width="6" height=".7" fill="#ccc"/><rect x="23" y="16" width="6" height=".7" fill="#ccc"/><rect x="28" y="2.5" width="5" height="5" fill="#444"/><rect x="29" y="3.5" width="3" height="3" fill="#aaa"/></svg>
<div class="a" style="left:904px;top:164px;width:15px;height:404px;background:#DADADA"></div>
<div class="a" style="left:904px;top:164px;width:15px;height:15px;background:#fff;border:1px solid #ABABAB"></div>
<svg style="left:907px;top:169px" width="9" height="5" viewBox="0 0 9 5"><path d="M0 5L4.5 0 9 5z" fill="#606060"/></svg>
<div class="a" style="left:904px;top:453px;width:15px;height:17px;background:#fff;border:1px solid #ABABAB"></div>
<div class="a" style="left:904px;top:553px;width:15px;height:15px;background:#fff;border:1px solid #ABABAB"></div>
<svg style="left:907px;top:558px" width="9" height="5" viewBox="0 0 9 5"><path d="M0 0L4.5 5 9 0z" fill="#606060"/></svg>
<svg style="left:908px;top:573px" width="8" height="9" viewBox="0 0 8 9"><path d="M0 4L4 0 8 4z M0 9L4 5 8 9z" fill="#606060"/></svg>
<svg style="left:908px;top:591px" width="8" height="9" viewBox="0 0 8 9"><path d="M0 0L4 4 8 0z M0 5L4 9 8 5z" fill="#606060"/></svg>
<div class="a" style="left:129px;top:177px;width:762px;height:430px;background:#fff;border:1px solid #C6C6C6;box-shadow:0 0 1px #ccc"></div>
<svg style="left:195px;top:233px" width="174" height="174" viewBox="0 0 174 174">
<defs><clipPath id="c1"><rect width="174" height="174"/></clipPath>
<radialGradient id="cup" cx=".5" cy=".5" r=".5"><stop offset="0" stop-color="#a0a0a0"/><stop offset=".8" stop-color="#8c8c8c"/><stop offset=".9" stop-color="#c8c8c8"/><stop offset="1" stop-color="#444"/></radialGradient>
<linearGradient id="lap" x1="0" y1="1" x2="1" y2="0"><stop offset="0" stop-color="#d4d4d4"/><stop offset="1" stop-color="#a8a8a8"/></linearGradient>
<pattern id="felt" width="3" height="3" patternUnits="userSpaceOnUse"><rect width="3" height="3" fill="#3a3a3a"/><rect width="1" height="1" fill="#555"/><rect x="2" y="1" width="1" height="1" fill="#2a2a2a"/></pattern></defs>
<g clip-path="url(#c1)">
<rect width="174" height="174" fill="#1d1d1d"/>
<path d="M0 113.8L44.2 70.1L76.3 87L75 125.8L64 158L60 174H0z" fill="url(#lap)"/>
<path d="M44.2 70.1L76.3 87" stroke="#e0e0e0" stroke-width="1.2"/>
<path d="M0 40L25.4 30L52.2 92.3L0 113.8z" fill="url(#felt)"/>
<path d="M2.7 41l8-3 6 17-8 3z" fill="#555"/>
<path d="M0 123q8-2 9 8q-2 9-9 9z" fill="#e8e8e8"/>
<path d="M53.5 126L72 122L74 160L56 162z" fill="#5e5e5e" stroke="#888" stroke-width="1"/>
<path d="M68.3 120.4L93.7 106.5L125.8 156.6L103 174L90 174z" fill="#c6c6c6"/>
<path d="M89 129q2-3 4 0q0 4-2 4q-2 0-2-4z" fill="#333"/>
<path d="M97.7 117.8L158 103L174 105.7V143L109.7 152.6z" fill="#161616" stroke="#444" stroke-width=".8"/>
<path d="M119 123q5-5 11 1q6-6 11-1q1 12-11 20q-12-8-11-20z" fill="#5c5c5c"/>
<circle cx="125" cy="129" r="2.2" fill="#e8e8e8"/><circle cx="135" cy="129" r="2.2" fill="#e8e8e8"/>
<g stroke="#f0f0f0" stroke-width="2.2" fill="none"><path d="M155 135v-8h5v8M155 131h5"/><path d="M155 124h8M155 124v-5"/><path d="M163 117l-8-2.5 8-2.5M158 115.5h0"/><path d="M155 108l4 3 4-3M159 111v4" transform="translate(0 -2)"/></g>
<circle cx="108.4" cy="87" r="18.7" fill="url(#cup)"/>
<path d="M51 18q17-16 34 0l2 30q-4 16-18 16q-14-2-18-16z" fill="#151515" stroke="#333" stroke-width="1"/>
<path d="M60 24q8-6 16 0v18q-8 6-16 0z" fill="#222" stroke="#444" stroke-width=".8"/>
<rect x="55" y="37.5" width="6.5" height="5.3" fill="#b0b0b0"/><rect x="71" y="57.5" width="4" height="5" fill="#d0d0d0"/><rect x="64" y="12" width="5.5" height="8" fill="#888"/>
<path d="M101.7 9l5-1.5 3 27-5 1.5z" fill="#3e3e3e"/>
<path d="M91 55l36-7 4 14-36 6.5z" fill="#2a2a2a"/><path d="M100 52l3 14M110 50l3 14" stroke="#555" stroke-width="1"/>
<path d="M136 22q10-24 38-20v16q-24-4-30 18q-4 20 8 44l-6 4q-16-28-10-62z" fill="#333"/>
<path d="M150 48l24-8v48l-16 6z" fill="#2e2e2e"/>
<path d="M156 56l16-6M157 64l15-5M158 72l14-5M159 80l13-4" stroke="#5a5a5a" stroke-width="1.2"/>
<rect y="159" width="174" height="15" fill="#E3AC10" opacity=".87"/>
</g></svg>
<svg style="left:423px;top:233px" width="174" height="174" viewBox="0 0 174 174">
<defs><linearGradient id="sky" x1="0" y1="0" x2="0.3" y2="1"><stop offset="0" stop-color="#707070"/><stop offset="1" stop-color="#a4a4a4"/></linearGradient></defs>
<rect width="174" height="174" fill="url(#sky)"/>
<path d="M0 143L12 139V126L43 119L44 91L48 88V48L99 33L106 36H115L118 51L128 50L150 70L151 80L174 102V174H0z" fill="#2f2f2f"/>
<path d="M48 48L99 33" stroke="#555" stroke-width="1"/>
<g stroke="#4c4c4c" stroke-width="1.3">
<path d="M82 42v118M90 41v119M97 40v120M52 62v98M58 60v100M62 59v101M130 56v104M137 60v100M143 66v94M149 72v88"/>
<path d="M82 52h15M82 64h15M82 76h15M82 88h15M82 100h15M82 112h15M82 124h15M82 136h15M82 148h15"/>
<path d="M52 72h10M52 84h10M52 96h10M52 108h10M52 120h10M52 132h10M52 144h10"/>
<path d="M130 66h19M130 78h19M130 90h19M130 102h19M130 114h19M130 126h19M130 138h19M130 150h19"/>
<path d="M4 148h26M16 136h26M10 136v24M22 136v24"/>
</g>
<path d="M101 38v122M118 52v108M126 52v108" stroke="#1c1c1c" stroke-width="2"/>
<path d="M158 100v60M165 110v50" stroke="#444" stroke-width="1"/>
<rect y="159" width="174" height="15" fill="#E39E1E" opacity=".93"/>
</svg>
<svg style="left:651px;top:233px" width="174" height="174" viewBox="0 0 174 174">
<defs><clipPath id="c3"><rect width="174" height="174"/></clipPath>
<linearGradient id="ceil" x1="0" y1="0" x2="0" y2="1"><stop offset="0" stop-color="#e6e9ee"/><stop offset=".7" stop-color="#d6dae0"/><stop offset="1" stop-color="#aeb2b8"/></linearGradient>
<pattern id="chk" width="5" height="5" patternUnits="userSpaceOnUse" patternTransform="rotate(-20)"><rect width="5" height="5" fill="#e4e4e8"/><rect width="5" height="2.2" fill="#6a6a72"/><rect width="2.2" height="5" fill="#6a6a72"/><rect width="2.2" height="2.2" fill="#16161c"/></pattern>
<pattern id="rack" width="6" height="5" patternUnits="userSpaceOnUse"><rect width="6" height="5" fill="#8a8e90"/><rect x="1" y="1" width="3.5" height="3" fill="#2a2c30"/></pattern></defs>
<g clip-path="url(#c3)">
<rect width="174" height="174" fill="#2a2c34"/>
<rect x="35" y="0" width="139" height="68" fill="url(#ceil)"/>
<path d="M65.6 0h20l1 29.5h-19z" fill="#b8bec8"/><path d="M68 2h15l1 25h-14z" fill="#7a8898"/>
<path d="M37.5 31l18 4 14 28-16-2z" fill="#6a7080"/><path d="M46 40l8 2 6 12-7-1z" fill="#c8a080"/>
<path d="M104.4 13.4L76.3 71" stroke="#fbfcfd" stroke-width="3.2"/>
<rect x="58" y="68" width="90" height="46" fill="#3a1212"/><rect x="58" y="68" width="90" height="10" fill="#6a1818"/><rect x="118" y="78" width="24" height="34" fill="#5a1616"/>
<rect x="57.6" y="77.6" width="9.5" height="17.5" fill="#c8d0d8"/>
<rect x="62" y="82" width="56" height="30" fill="#18181c"/><rect x="138" y="88" width="10" height="24" fill="#20242e"/>
<rect x="34.8" y="65.6" width="24" height="36" fill="#1e1e20"/><circle cx="46.9" cy="89.7" r="9" fill="#555"/><circle cx="46.9" cy="89.7" r="6" fill="#222"/><circle cx="46.9" cy="74" r="3" fill="#444"/>
<rect x="0" y="0" width="35" height="102" fill="#14171e"/>
<rect x="0" y="0" width="36" height="12" fill="#0e0e10"/>
<rect x="2.7" y="12" width="13.3" height="41" fill="#aebc98"/><rect x="4" y="14" width="10" height="12" fill="#d8d8c0"/>
<rect x="17.4" y="20" width="16" height="37" fill="#3a5a88"/><rect x="18.5" y="21" width="14" height="10" fill="#b8d0e0"/>
<rect x="4" y="53.5" width="28" height="34.5" fill="#c8d8e8"/><rect x="5.5" y="55" width="25" height="31" fill="#1c3454"/>
<rect x="2.7" y="88" width="29.5" height="14" fill="#a8c4b4"/>
<path d="M0 102H64L70 158H0z" fill="#4a5262"/>
<rect x="0" y="107" width="12" height="19" fill="#d8e0e8"/><rect x="10.7" y="110" width="17" height="8" fill="#1e3a78"/>
<path d="M29.5 104L48 107L62 147L40 145z" fill="#34406a"/><circle cx="44" cy="125" r="4" fill="#8ab0d8"/>
<path d="M48 107L66 104L70 144L60 146z" fill="#c4d4dc"/>
<rect x="18.7" y="131" width="21" height="24" fill="#5a4a3a"/><rect x="20.5" y="133" width="17" height="19" fill="#7a9a6a"/>
<rect x="0" y="128.5" width="18" height="26.5" fill="#3a8888"/><rect x="1" y="132" width="15" height="3" fill="#a0d0d0"/><rect x="1" y="140" width="15" height="3" fill="#a0d0d0"/>
<path d="M69.6 77.6Q40 100 18.7 128.5" stroke="#1a1a1a" stroke-width="1.4" fill="none"/>
<rect x="70.3" y="112.4" width="79" height="46" fill="url(#rack)"/>
<g fill="#d84040"><rect x="120" y="115" width="2.5" height="2"/><rect x="120" y="120" width="2.5" height="2"/><rect x="120" y="125" width="2.5" height="2"/><rect x="120" y="130" width="2.5" height="2"/><rect x="120" y="135" width="2.5" height="2"/><rect x="120" y="140" width="2.5" height="2"/><rect x="120" y="145" width="2.5" height="2"/><rect x="120" y="150" width="2.5" height="2"/></g>
<g fill="#98c078"><rect x="125" y="115" width="21" height="1.5"/><rect x="125" y="120" width="21" height="1.5"/><rect x="125" y="125" width="21" height="1.5"/><rect x="125" y="130" width="21" height="1.5"/><rect x="125" y="135" width="21" height="1.5"/><rect x="125" y="140" width="21" height="1.5"/><rect x="125" y="145" width="21" height="1.5"/><rect x="125" y="150" width="21" height="1.5"/></g>
<path d="M137 40L174 34V150H149V112L131 70z" fill="url(#chk)"/>
<path d="M137 40L133 72L90 108L76 98L81 92z" fill="url(#chk)"/>

<path d="M150 150h24v10h-24z" fill="#1a1a1e"/>
<path d="M76 98L86 106L82 116L72 116L68 110z" fill="#b88a6c"/>
<path d="M132 143L149 146L151 157L134 152z" fill="#b08064"/>
<path d="M137 26Q140 22 156 22L170 26L172 48L160 54L150 52L140 42z" fill="#b8886c"/>
<path d="M150 46Q158 56 170 48L168 56L154 57z" fill="#2a1e1a"/>
<path d="M134.6 26Q134 5 152 3Q172 2 174 18V34L168 30Q166 22 154 22Q142 22 137 28z" fill="#141416"/>
<rect y="159" width="174" height="15" fill="#DE8A3A" opacity=".93"/>
</g></svg>
<div class="a" style="left:130px;top:431px;width:760px;height:175px;background:linear-gradient(90deg,#E35A48 0%,#E56A44 30%,#EC8A38 55%,#F2A82E 78%,#F7C625 100%)"></div>
<div class="a" style="left:394px;top:469px;width:4px;height:94px;background:#F7B80C"></div>
<div class="a" style="left:622px;top:469px;width:4px;height:94px;background:#F7B80C"></div>
<div class="t" style="left:244.10px;top:473.04px;font-size:31.50px;color:#FFFFFF;font-weight:bold;">255K</div>
<div class="t" style="left:219.20px;top:518.16px;font-size:16.00px;color:#FFFFFF;transform:scaleX(0.9780);">This is the sample</div>
<div class="t" style="left:239.92px;top:538.96px;font-size:16.00px;color:#FFFFFF;transform:scaleX(0.9753);">Dummy text</div>
<div class="t" style="left:471.40px;top:473.04px;font-size:31.50px;color:#FFFFFF;font-weight:bold;transform:scaleX(0.9941);">344M</div>
<div class="t" style="left:446.90px;top:518.16px;font-size:16.00px;color:#FFFFFF;transform:scaleX(0.9780);">This is the sample</div>
<div class="t" style="left:467.62px;top:538.96px;font-size:16.00px;color:#FFFFFF;transform:scaleX(0.9753);">Dummy text</div>
<div class="t" style="left:699.20px;top:473.04px;font-size:31.50px;color:#FFFFFF;font-weight:bold;">454K</div>
<div class="t" style="left:673.90px;top:518.16px;font-size:16.00px;color:#FFFFFF;transform:scaleX(0.9780);">This is the sample</div>
<div class="t" style="left:694.62px;top:538.96px;font-size:16.00px;color:#FFFFFF;transform:scaleX(0.9753);">Dummy text</div>
<div class="a" style="left:5px;top:176px;width:4px;height:1px;background:#E6E6E6"></div>
<div class="a" style="left:11px;top:176px;width:2px;height:1px;background:#E6E6E6"></div>
<div class="t" style="left:9.10px;top:633.17px;font-size:11.50px;color:#605E5C;transform:scaleX(0.9723);">Slide 24 of 31</div>
<div class="t" style="left:110.70px;top:633.17px;font-size:11.50px;color:#444444;transform:scaleX(0.9755);">English (United States)</div>
<svg style="left:241px;top:631px" width="17" height="14" viewBox="0 0 17 14" fill="none" stroke="#505050" stroke-width="1.1">
<path d="M6 1.5A6 6 0 1 0 11 9"/><path d="M6 1v5l3 2"/><path d="M9.5 8.5l5 5M14.5 8.5l-5 5"/></svg>
<div class="t" style="left:261.50px;top:633.17px;font-size:11.50px;color:#444444;transform:scaleX(0.9820);">Accessibility: Investigate</div>
<svg style="left:483px;top:630px" width="18" height="16" viewBox="0 0 18 16" fill="none" stroke="#505050" stroke-width="1">
<path d="M1 6.5h16M1 10.5h16M1 14.5h16"/><path d="M6 4l3-3 3 3"/></svg>
<div class="t" style="left:502.50px;top:633.17px;font-size:11.50px;color:#444444;transform:scaleX(0.9475);">Notes</div>
<div class="a" style="left:551px;top:628px;width:40px;height:21px;background:#C8C6C4"></div>
<svg style="left:564px;top:632px" width="15" height="13" viewBox="0 0 15 13" fill="none" stroke="#404040" stroke-width="1.1">
<rect x=".5" y=".5" width="13" height="11"/><rect x="3.5" y="2.5" width="8" height="5"/><path d="M3 9.5h8"/></svg>
<svg style="left:603px;top:632px" width="15" height="13" viewBox="0 0 15 13" fill="none" stroke="#404040" stroke-width="1.1">
<rect x=".5" y=".5" width="5.5" height="4.5"/><rect x="8.5" y=".5" width="5.5" height="4.5"/><rect x=".5" y="7.5" width="5.5" height="4.5"/><rect x="8.5" y="7.5" width="5.5" height="4.5"/></svg>
<svg style="left:643px;top:632px" width="15" height="13" viewBox="0 0 15 13" fill="none" stroke="#404040" stroke-width="1.1">
<path d="M.5 .5h5.5l1.5 1.5 1.5-1.5h5.5v11h-5.5l-1.5 1-1.5-1h-5.5z"/><path d="M7.5 2v10M2.5 3.5h3M2.5 6h3M9.5 3.5h3M9.5 6h3"/></svg>
<svg style="left:684px;top:631px" width="15" height="14" viewBox="0 0 15 14" fill="none" stroke="#404040" stroke-width="1.1">
<path d="M0 .5h14"/><path d="M1.5 .5v7h11v-7"/><path d="M7 7.5v5M4.5 13h5"/><path d="M5.5 2.5v3l3-1.5z"/></svg>
<div class="a" style="left:717px;top:637px;width:8px;height:1px;background:#404040"></div>
<div class="a" style="left:730px;top:637px;width:100px;height:1px;background:#A0A0A0"></div>
<div class="a" style="left:780px;top:634px;width:1px;height:7px;background:#A0A0A0"></div>
<div class="a" style="left:757px;top:633px;width:5px;height:11px;background:#6E6E6E"></div>
<svg style="left:835px;top:633px" width="9" height="9" viewBox="0 0 9 9" stroke="#404040" stroke-width="1.1"><path d="M0 4.5h9M4.5 0v9"/></svg>
<div class="t" style="left:856.50px;top:633.17px;font-size:11.50px;color:#444444;transform:scaleX(0.9038);">60%</div>
<svg style="left:889px;top:630px" width="16" height="15" viewBox="0 0 16 15" fill="none" stroke="#404040" stroke-width="1.1">
<rect x="4.5" y="4.5" width="7" height="6"/><path d="M5.5 2.5l2.5-2 2.5 2M5.5 12.5l2.5 2 2.5-2M2.5 5l-2 2.5 2 2.5M13.5 5l2 2.5-2 2.5"/></svg>
</body></html>
